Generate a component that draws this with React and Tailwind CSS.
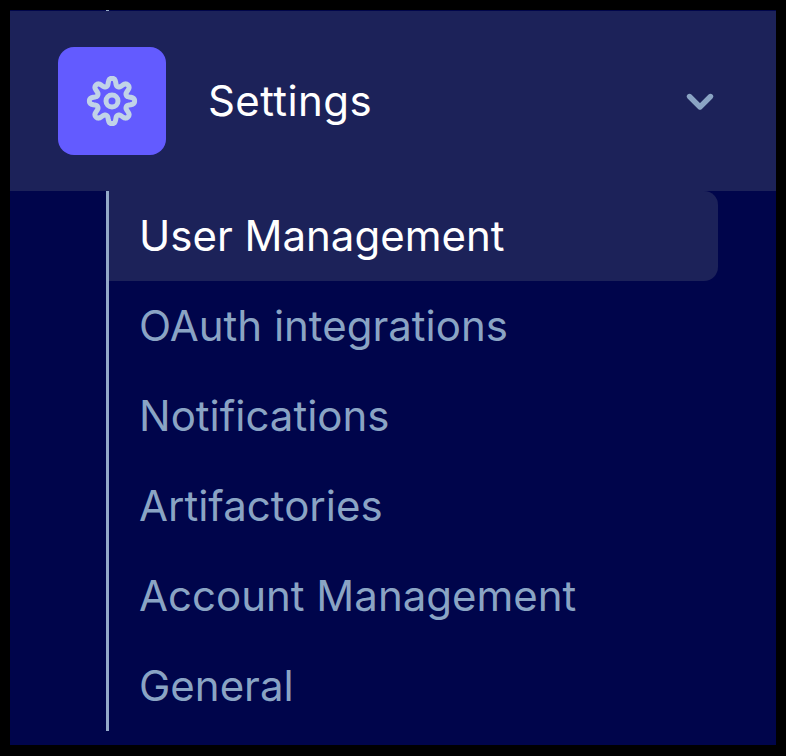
const items = ["OAuth integrations", "Notifications", "Artifactories", "Account Management", "General"];

function gearPath() {
  const pts = [];
  const n = 160;
  for (let i = 0; i < n; i++) {
    const a = (i / n) * Math.PI * 2;
    const w = Math.tanh(1.5 * Math.cos(8 * a)) / Math.tanh(1.5);
    const r = 19 + 3.6 * w;
    pts.push(`${(30 + r * Math.sin(a)).toFixed(2)} ${(30 - r * Math.cos(a)).toFixed(2)}`);
  }
  return `M${pts.join("L")}Z`;
}

export default function App() {
  return (
    <div className="w-[786px] h-[756px] bg-black pt-[10px] pl-[10px] font-['Inter',sans-serif]">
      <div className="w-[766px] h-[735px] bg-[#00054b]">
        <div className="h-[1px] ml-[96px] w-[3px] bg-[#94a9c9]" />
        <div className="h-[180px] bg-[#1c2259] flex items-center pl-[48px] pr-[58px]">
          <div className="w-[108px] h-[108px] rounded-[16px] bg-[#635bff] flex items-center justify-center">
            <svg width="60" height="60" viewBox="0 0 60 60" fill="none" stroke="#c1d3e8" strokeWidth="5" strokeLinejoin="round">
              <path d={gearPath()} />
              <circle cx="30" cy="30" r="6" />
            </svg>
          </div>
          <span className="ml-[42px] mb-[2px] text-[42px] text-white flex-1 tracking-[0.4px]">Settings</span>
          <svg width="36" height="36" viewBox="0 0 24 24" fill="none" stroke="#8aa4c4" strokeWidth="3.6" strokeLinecap="round" strokeLinejoin="round">
            <path d="M19 9l-7 7-7-7" />
          </svg>
        </div>
        <div className="ml-[96px] w-[612px] border-l-[3px] border-[#94a9c9]">
          <div className="h-[90px] flex items-center pb-[2px] pl-[30px] bg-[#1c2259] rounded-r-[14px] text-[42px] text-white">User Management</div>
          {items.map((t) => (
            <div key={t} className="h-[90px] flex items-center pb-[2px] pl-[30px] text-[42px] text-[#8aa4c4]">{t}</div>
          ))}
        </div>
      </div>
    </div>
  );
}
